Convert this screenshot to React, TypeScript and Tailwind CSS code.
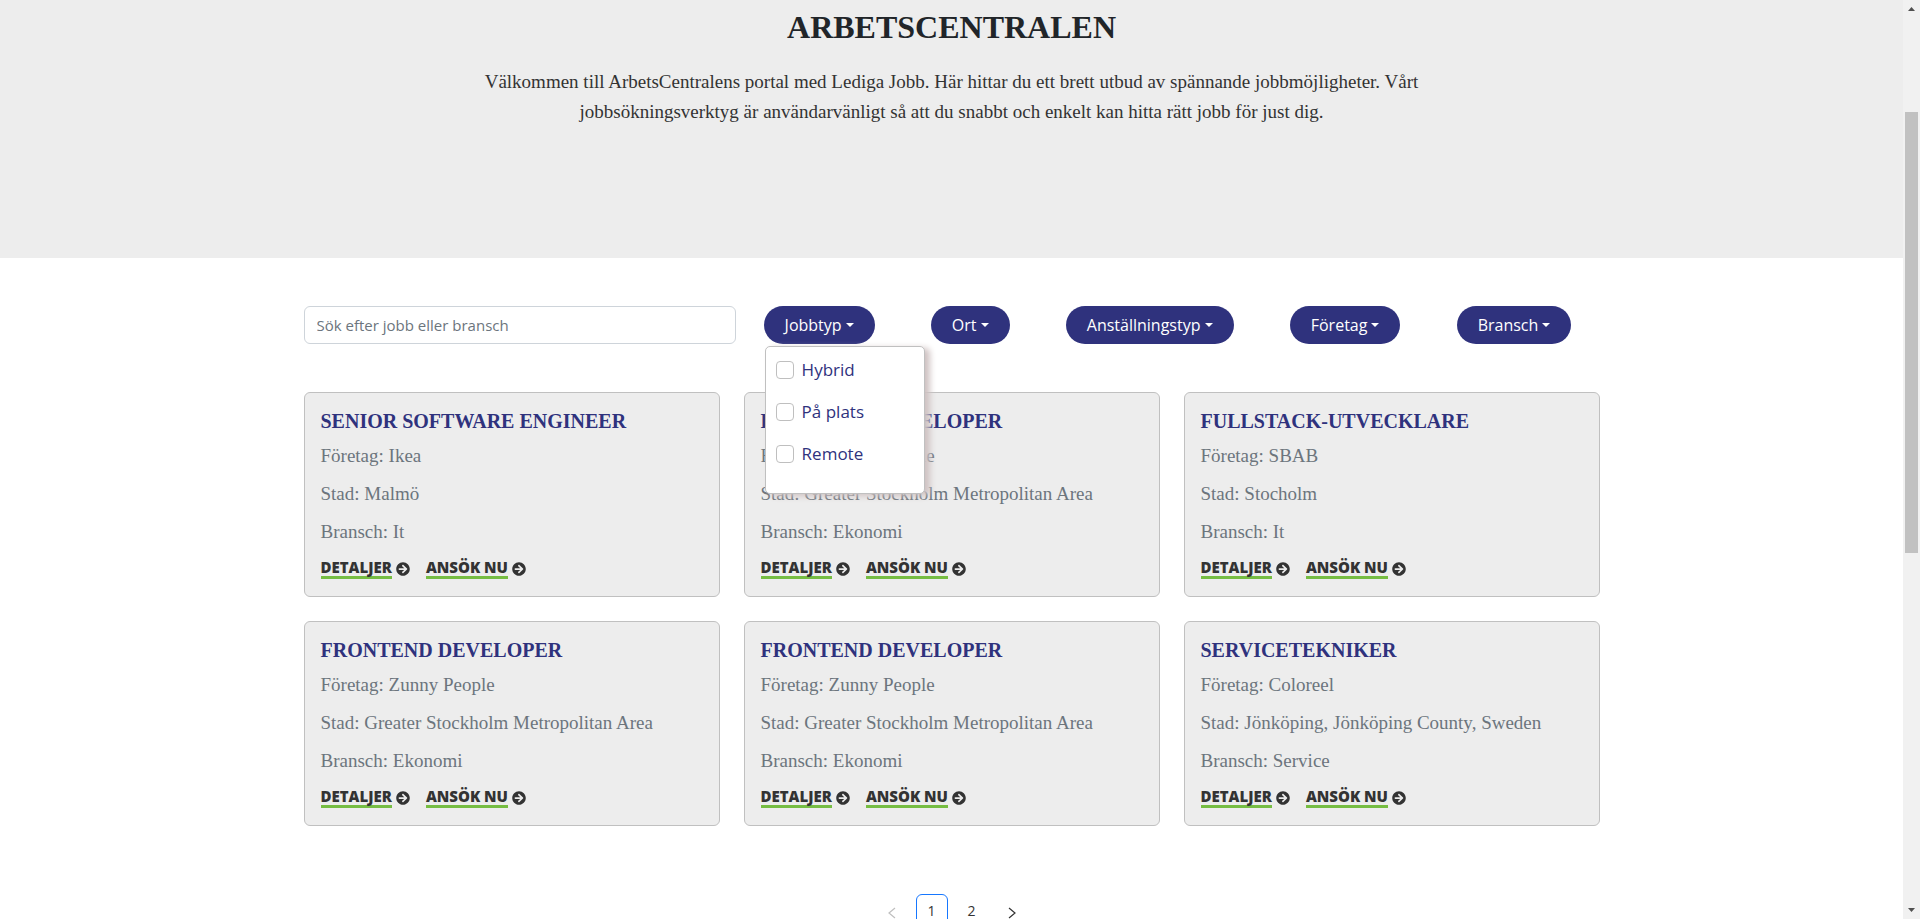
import { FaArrowCircleRight } from "react-icons/fa";

const filters = ["Jobbtyp", "Ort", "Anställningstyp", "Företag", "Bransch"];
const jobTypes = ["Hybrid", "På plats", "Remote"];

type Job = { title: string; company: string; city: string; industry: string };

const jobs: Job[] = [
  { title: "SENIOR SOFTWARE ENGINEER", company: "Ikea", city: "Malmö", industry: "It" },
  { title: "FRONTEND DEVELOPER", company: "Zunny People", city: "Greater Stockholm Metropolitan Area", industry: "Ekonomi" },
  { title: "FULLSTACK-UTVECKLARE", company: "SBAB", city: "Stocholm", industry: "It" },
  { title: "FRONTEND DEVELOPER", company: "Zunny People", city: "Greater Stockholm Metropolitan Area", industry: "Ekonomi" },
  { title: "FRONTEND DEVELOPER", company: "Zunny People", city: "Greater Stockholm Metropolitan Area", industry: "Ekonomi" },
  { title: "SERVICETEKNIKER", company: "Coloreel", city: "Jönköping, Jönköping County, Sweden", industry: "Service" },
];

function CardLink({ label }: { label: string }) {
  return (
    <a href="#" className="flex items-center gap-1 text-[#333333]">
      <span className="border-b-3 border-[#76bd43] font-['Open_Sans',sans-serif] text-[15px] leading-[17px] font-extrabold">
        {label}
      </span>
      <FaArrowCircleRight size={14} aria-hidden="true" />
    </a>
  );
}

function JobCard({ job }: { job: Job }) {
  return (
    <article className="rounded-md border border-[#c0c0c0] bg-[#ededed] px-4 pt-4 pb-[17px] font-['Liberation_Serif',serif]">
      <h2 className="text-[20px] leading-6 font-bold text-[#2f327d]">{job.title}</h2>
      <div className="mt-1 text-[19px] leading-[38px] text-[#6c757d]">
        <p>Företag: {job.company}</p>
        <p>Stad: {job.city}</p>
        <p>Bransch: {job.industry}</p>
      </div>
      <div className="mt-2 flex gap-4">
        <CardLink label="DETALJER" />
        <CardLink label="ANSÖK NU" />
      </div>
    </article>
  );
}

function TypeMenu() {
  return (
    <div className="absolute top-full left-px z-10 mt-[2px] flex h-[148px] w-40 flex-col gap-[14px] rounded-[5px] border border-[#c0c0c0] bg-white px-[10px] pt-[9px] shadow-[5px_2px_6px_#cfc2c2]">
      {jobTypes.map((type) => (
        <label key={type} className="flex h-7 items-center gap-2 text-[17px] text-[#2f327d]">
          <input type="checkbox" className="size-[18px] appearance-none rounded-sm border border-[#bfbfbf] bg-white" />
          {type}
        </label>
      ))}
    </div>
  );
}

function Chevron({ flip = false }: { flip?: boolean }) {
  return (
    <svg width="8" height="12" viewBox="0 0 8 12" fill="none" stroke="currentColor" strokeWidth="1.2" aria-hidden="true">
      <path d={flip ? "M7 1 1 6l6 5" : "m1 1 6 5-6 5"} />
    </svg>
  );
}

export default function App() {
  return (
    <div className="flex h-screen bg-white font-['Open_Sans',sans-serif]">
      <main className="min-w-0 flex-1 overflow-hidden">
        <header className="h-[258px] bg-[#ededed] pt-[7px] text-center font-['Liberation_Serif',serif]">
          <h1 className="text-[32px] leading-10 font-bold text-[#212529]">ARBETSCENTRALEN</h1>
          <p className="mx-auto mt-5 max-w-[960px] text-[19px] leading-[30px] text-[#333333]">
            Välkommen till ArbetsCentralens portal med Lediga Jobb. Här hittar du ett brett utbud av spännande
            jobbmöjligheter. Vårt jobbsökningsverktyg är användarvänligt så att du snabbt och enkelt kan hitta rätt jobb
            för just dig.
          </p>
        </header>

        <div className="mx-auto max-w-[1320px] px-3 pt-12">
          <div className="flex">
            <input
              type="search"
              aria-label="Sök efter jobb eller bransch"
              placeholder="Sök efter jobb eller bransch"
              className="h-[38px] w-1/3 rounded-md border border-[#ced4da] px-3 text-[15px] placeholder:text-[#6c757d]"
            />
            <div className="flex flex-1 justify-around">
              {filters.map((name, i) => (
                <div key={name} className="relative">
                  <button
                    type="button"
                    aria-expanded={i === 0}
                    className="flex h-[38px] items-center gap-1 rounded-full bg-[#2f327d] px-[21px] text-[16px] text-white"
                  >
                    {name}
                    <svg width="8" height="4" viewBox="0 0 8 4" fill="currentColor" aria-hidden="true">
                      <path d="M0 0h8L4 4z" />
                    </svg>
                  </button>
                  {i === 0 && <TypeMenu />}
                </div>
              ))}
            </div>
          </div>

          <section className="mt-12 grid grid-cols-3 gap-6">
            {jobs.map((job, i) => (
              <JobCard key={i} job={job} />
            ))}
          </section>

          <nav aria-label="Sidor" className="mt-[68px] flex justify-center gap-2 text-[14px] text-[#333333]">
            <button type="button" aria-label="Föregående" disabled className="flex size-8 items-center justify-center pt-[6px] text-[#bfbfbf]">
              <Chevron flip />
            </button>
            <button type="button" className="size-8 rounded-md border border-[#1677ff] bg-white">
              1
            </button>
            <button type="button" className="size-8">
              2
            </button>
            <button type="button" aria-label="Nästa" className="flex size-8 items-center justify-center pt-[6px]">
              <Chevron />
            </button>
          </nav>
        </div>
      </main>

      <div className="flex w-[17px] flex-col items-center bg-[#f1f1f1] text-[#505050]" aria-hidden="true">
        <svg width="17" height="17" viewBox="0 0 17 17" fill="currentColor">
          <path d="M5 11h7L8.500 7z" />
        </svg>
        <div className="flex w-[13px] flex-1 flex-col">
          <div className="h-[95px]" />
          <div className="h-[441px] bg-[#c1c1c1]" />
        </div>
        <svg width="17" height="17" viewBox="0 0 17 17" fill="currentColor">
          <path d="M5 6h7l-3.500 4z" />
        </svg>
      </div>
    </div>
  );
}
